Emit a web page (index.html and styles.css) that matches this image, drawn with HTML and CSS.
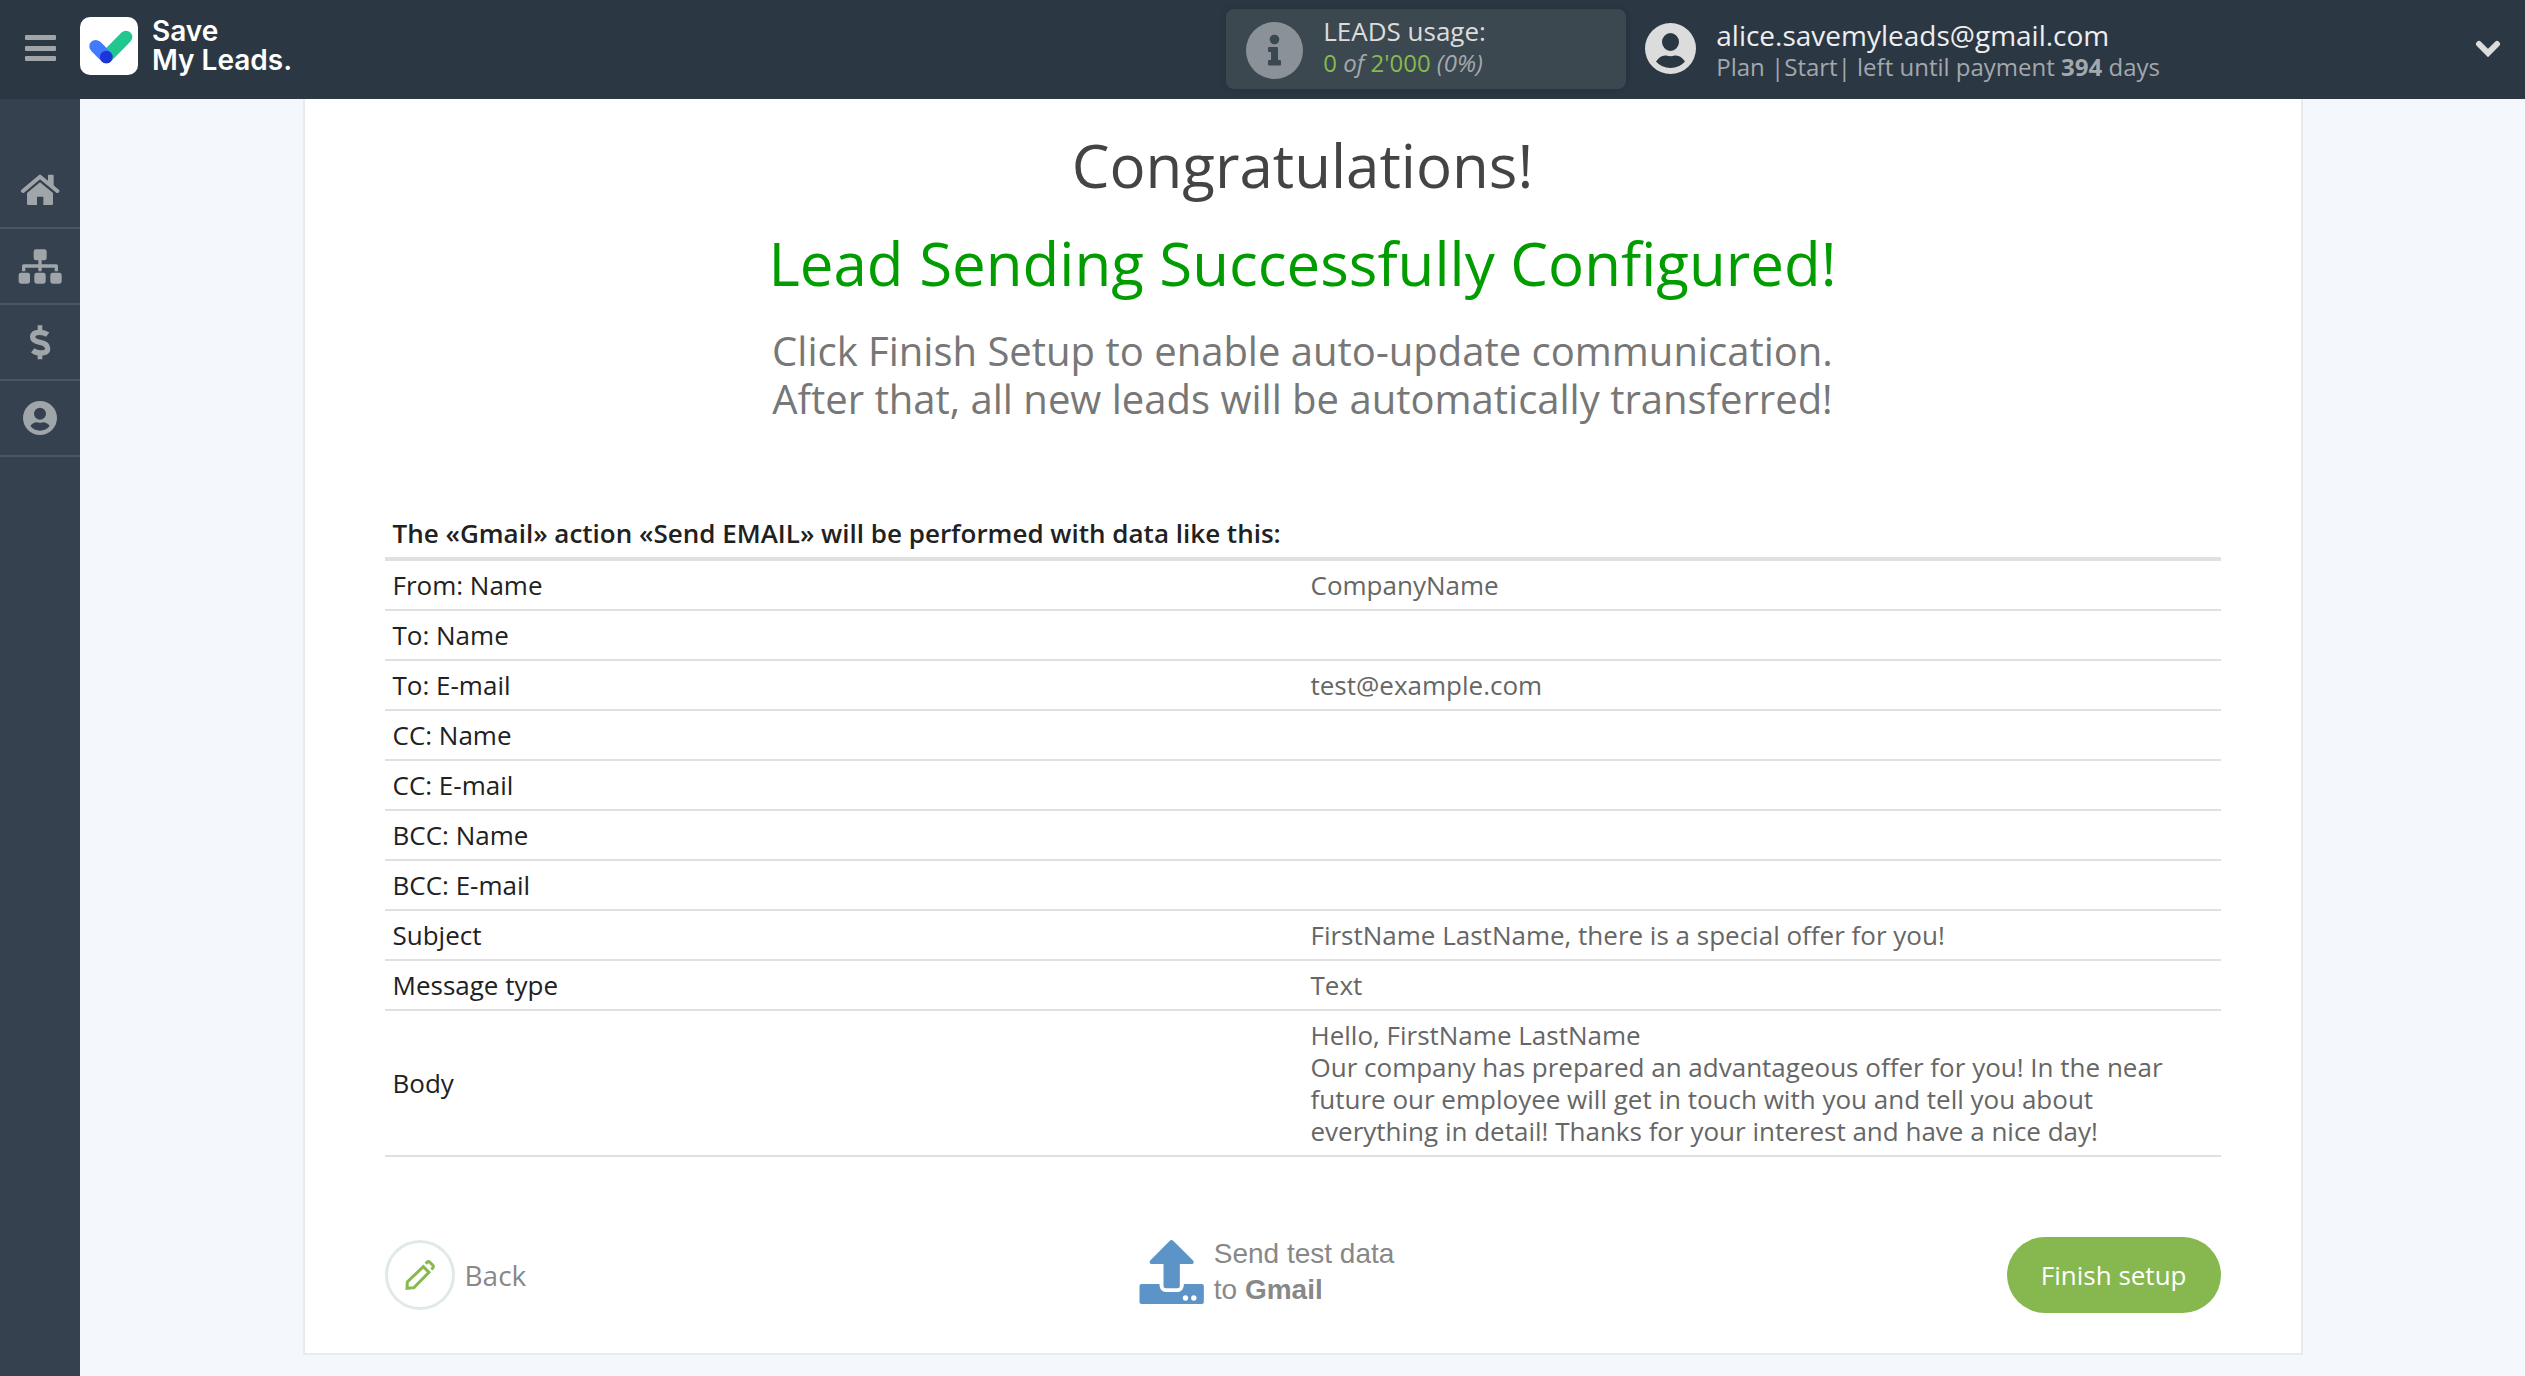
FILE: index.html
```html
<!DOCTYPE html>
<html lang="en">
<head>
    <meta charset="UTF-8">
    <meta name="viewport" content="width=device-width, initial-scale=1.0">
    <title>Save My Leads</title>
    <link rel="stylesheet" href="styles.css">
</head>
<body>
    <header class="topbar">
        <button class="menu-btn" type="button" aria-label="Menu">
            <svg width="31" height="27" viewBox="0 0 31 27" fill="currentColor">
                <rect width="31" height="5" rx="1"/>
                <rect y="11" width="31" height="5" rx="1"/>
                <rect y="21" width="31" height="5" rx="1"/>
            </svg>
        </button>
        <a class="logo" href="#">
            <svg width="58" height="58" viewBox="0 0 174 174">
                <rect width="174" height="174" rx="30" fill="#fff"/>
                <g stroke-width="38" stroke-linecap="round">
                    <path d="M47 88L79 120" stroke="#407bff"/>
                    <path d="M138 60L79 120" stroke="#22c78f"/>
                </g>
                <path d="M47 88L79 120" stroke="#407bff" stroke-width="38"/>
                <circle cx="79" cy="120" r="19" fill="#1c34d8"/>
            </svg>
            <span class="logo-text">Save<br>My Leads.</span>
        </a>
        <div class="usage">
            <svg width="57" height="57" viewBox="0 0 57 57">
                <circle cx="28.5" cy="28.5" r="28.5" fill="#8a9298"/>
                <g fill="#3b4850">
                    <circle cx="28.5" cy="17.5" r="4.8"/>
                    <path d="M23 25h8a1 1 0 0 1 1 1v12h2a1 1 0 0 1 1 1v3.500a1 1 0 0 1-1 1h-11a1 1 0 0 1-1-1v-3.500a1 1 0 0 1 1-1h2v-8h-2a1 1 0 0 1-1-1v-3a1 1 0 0 1 1-1z"/>
                </g>
            </svg>
            <div class="usage-info">
                <div>LEADS usage:</div>
                <div class="line-sub"><span class="count">0</span> <i>of</i> <span class="count">2'000</span> <i>(0%)</i></div>
            </div>
        </div>
        <div class="account">
            <svg width="51" height="51" viewBox="0 0 102 102" fill="currentColor" fill-rule="evenodd">
                <path d="M51 0a51 51 0 1 0 0 102a51 51 0 1 0 0-102zM51 20a17 18 0 1 1 0 36a17 18 0 1 1 0-36zM22 77Q31 63 43 65Q51 68 59 65Q71 63 80 77Q69 90 51 90Q33 90 22 77z"/>
            </svg>
            <div class="account-info">
                <div class="email">alice.savemyleads@gmail.com</div>
                <div class="line-sub">Plan |Start| left until payment <b>394</b> days</div>
            </div>
            <button class="expand-btn" type="button" aria-label="Account menu">
                <svg width="26" height="17" viewBox="0 0 26 17" fill="none" stroke="currentColor" stroke-width="6" stroke-linecap="round">
                    <path d="M4 4L13 13L22 4"/>
                </svg>
            </button>
        </div>
    </header>

    <div class="layout">
        <nav class="sidebar">
            <a href="#" aria-label="Home">
                <svg width="40" height="32" viewBox="60 523 120 96">
                    <path d="M69 574L120 531L172 574" fill="none" stroke="currentColor" stroke-width="12" stroke-linecap="round" stroke-linejoin="round"/>
                    <path d="M144 527q0-2 2-2h13q2 0 2 2v34l-17-14zM120 548L159 580V612q0 4-4 4H130V591H111V616H85q-4 0-4-4V580z" fill="currentColor"/>
                </svg>
            </a>
            <a href="#" aria-label="Connections">
                <svg width="44" height="35" viewBox="54 746 132 105" fill="currentColor">
                    <rect x="101" y="747" width="39" height="33" rx="7"/>
                    <rect x="56" y="817" width="34" height="33" rx="7"/>
                    <rect x="103" y="817" width="34" height="33" rx="7"/>
                    <rect x="151" y="817" width="34" height="33" rx="7"/>
                    <path d="M120 778V813M71 813V797H169V813" fill="none" stroke="currentColor" stroke-width="10" stroke-linejoin="round"/>
                </svg>
            </a>
            <a href="#" aria-label="Billing">
                <svg width="22" height="35" viewBox="87 974 66 105" fill="none" stroke="currentColor">
                    <path d="M143 1003Q134 996 118 996Q98 996 98 1010Q98 1022 120 1026Q143 1030 143 1045Q143 1058 122 1058Q108 1058 98 1050" stroke-width="16"/>
                    <path d="M120 975V992M120 1060V1077" stroke-width="14"/>
                </svg>
            </a>
            <a href="#" aria-label="Profile">
                <svg width="34" height="34" viewBox="0 0 102 102" fill="currentColor" fill-rule="evenodd">
                    <path d="M51 0a51 51 0 1 0 0 102a51 51 0 1 0 0-102zM51 20a18 18 0 1 1 0 36a18 18 0 1 1 0-36zM22 75Q31 63 43 64Q51 67 59 64Q71 63 80 75Q69 89 51 89Q33 89 22 75z"/>
                </svg>
            </a>
        </nav>

        <main class="content">
            <div class="card">
                <div class="intro">
                    <h1>Congratulations!</h1>
                    <h2>Lead Sending Successfully Configured!</h2>
                    <p>Click Finish Setup to enable auto-update communication.<br>After that, all new leads will be automatically transferred!</p>
                </div>

                <table class="data">
                    <thead>
                        <tr><th colspan="2">The «Gmail» action «Send EMAIL» will be performed with data like this:</th></tr>
                    </thead>
                    <tbody>
                        <tr><td>From: Name</td><td>CompanyName</td></tr>
                        <tr><td>To: Name</td><td></td></tr>
                        <tr><td>To: E-mail</td><td>test@example.com</td></tr>
                        <tr><td>CC: Name</td><td></td></tr>
                        <tr><td>CC: E-mail</td><td></td></tr>
                        <tr><td>BCC: Name</td><td></td></tr>
                        <tr><td>BCC: E-mail</td><td></td></tr>
                        <tr><td>Subject</td><td>FirstName LastName, there is a special offer for you!</td></tr>
                        <tr><td>Message type</td><td>Text</td></tr>
                        <tr>
                            <td>Body</td>
                            <td>Hello, FirstName LastName<br>Our company has prepared an advantageous offer for you! In the near future our employee will get in touch with you and tell you about everything in detail! Thanks for your interest and have a nice day!</td>
                        </tr>
                    </tbody>
                </table>

                <div class="actions">
                    <a class="back" href="#">
                        <span class="back-icon">
                            <svg width="30" height="30" viewBox="105 183 90 90" fill="none" stroke="currentColor" stroke-width="9">
                                <path d="M160 203L177 220L132 266L111 268L112 249z"/>
                                <path d="M167 194L171 190Q175 186 180 190L188 198Q192 202 188 207L184 211"/>
                            </svg>
                        </span>
                        Back
                    </a>
                    <button class="send-test" type="button">
                        <svg width="65" height="64" viewBox="118 120 194 192" fill="#5c94c8">
                            <path d="M210 122q5-4 10 0L279 181q4 5 2 9q-1 2-5 2H240V258q0 7-7 7H198q-7 0-7-7V192H155q-4 0-5-2q-2-4 2-9z"/>
                            <path fill-rule="evenodd" d="M125 252H179V256Q181 276 198 276H233Q250 276 252 256V252H306q6 0 6 6V306q0 6-6 6H125q-6 0-6-6V258q0-6 6-6zM257 286a8 8 0 1 0 0 16a8 8 0 1 0 0-16zM282 286a8 8 0 1 0 0 16a8 8 0 1 0 0-16z"/>
                        </svg>
                        <span>Send test data<br>to <b>Gmail</b></span>
                    </button>
                    <button class="finish" type="button">Finish setup</button>
                </div>
            </div>
        </main>
    </div>
</body>
</html>
```

FILE: styles.css
```css
* {
    box-sizing: border-box;
}

body {
    margin: 0;
    min-height: 100vh;
    display: flex;
    flex-direction: column;
    background: #f4f7fc;
    font-family: "Open Sans", sans-serif;
    font-size: 26px;
    line-height: 32px;
    color: #212121;
}

a {
    color: inherit;
    text-decoration: none;
}

button {
    padding: 0;
    border: 0;
    background: none;
    font: inherit;
    color: inherit;
    cursor: pointer;
}

svg {
    display: block;
    flex-shrink: 0;
}

/* top bar */
.topbar {
    display: flex;
    align-items: center;
    height: 99px;
    padding-bottom: 2px;
    background: #2b3743;
    color: #dcdcdc;
}

.menu-btn {
    display: flex;
    justify-content: center;
    width: 80px;
    color: #a0a5a9;
}

.logo {
    display: flex;
    align-items: center;
    gap: 14px;
    padding-bottom: 6px;
    color: #fff;
}

.logo-text {
    font-family: Inter, sans-serif;
    font-size: 28px;
    font-weight: 600;
    line-height: 29px;
}

.usage {
    display: flex;
    align-items: center;
    gap: 20px;
    width: 400px;
    height: 80px;
    margin-left: auto;
    margin-right: 15px;
    padding: 4px 20px 0;
    background: #3b4850;
    border-radius: 8px;
    box-shadow: 0 0 6px rgba(0, 0, 0, 0.15);
}

.usage-info {
    padding-bottom: 8px;
}

.line-sub {
    font-size: 24px;
    color: #a3a8ac;
}

.count {
    color: #86b94e;
}

.account {
    display: flex;
    align-items: center;
    width: 35%;
    padding: 0 24px 0 4px;
}

.account-info {
    flex: 1;
    margin-left: 20px;
    padding-top: 4px;
}

.email {
    font-size: 28px;
    color: #eee;
}

.expand-btn {
    color: #dcdcdc;
}

/* side menu */
.layout {
    display: flex;
    flex: 1;
}

.sidebar {
    flex: 0 0 80px;
    padding-top: 54px;
    background: #36414f;
}

.sidebar a {
    display: flex;
    align-items: center;
    justify-content: center;
    height: 76px;
    border-bottom: 2px solid #4a5663;
    color: #a0a5a9;
}

/* content */
.content {
    flex: 1;
    padding-bottom: 20px;
}

.card {
    max-width: 2000px;
    margin: 0 auto;
    padding: 30px 80px 40px;
    background: #fff;
    border: 2px solid #e8eaec;
    border-top: 0;
}

.intro {
    margin-bottom: 86px;
    text-align: center;
}

.intro h1,
.intro h2 {
    margin: 0 0 26px;
    font-size: 60px;
    font-weight: 400;
    line-height: 72px;
    color: #444;
}

.intro h2 {
    margin-bottom: 28px;
    color: #009c00;
}

.intro p {
    margin: 0;
    font-size: 40px;
    line-height: 48px;
    color: #777;
}

.data {
    width: 100%;
    table-layout: fixed;
    border-spacing: 0;
}

.data th,
.data td {
    height: 50px;
    padding: 8px;
    border-bottom: 2px solid #e0e0e0;
    text-align: left;
}

.data th {
    border-bottom-width: 4px;
    font-weight: 600;
}

.data td + td {
    color: #666;
}

.actions {
    display: flex;
    align-items: center;
    justify-content: space-between;
    height: 76px;
    margin-top: 80px;
    font-size: 28px;
    color: #888;
}

.back {
    display: flex;
    align-items: center;
    gap: 10px;
}

.back-icon {
    display: flex;
    align-items: center;
    justify-content: center;
    width: 70px;
    height: 70px;
    border: 3px solid #e0e9e9;
    border-radius: 50%;
    color: #86b94e;
}

.send-test {
    display: flex;
    align-items: center;
    gap: 10px;
    padding-bottom: 6px;
    font-family: "Liberation Sans", sans-serif;
    line-height: 36px;
    text-align: left;
}

.finish {
    height: 76px;
    padding: 0 34px;
    border-radius: 38px;
    background: #86b84f;
    font-size: 26px;
    color: #fff;
}
```
